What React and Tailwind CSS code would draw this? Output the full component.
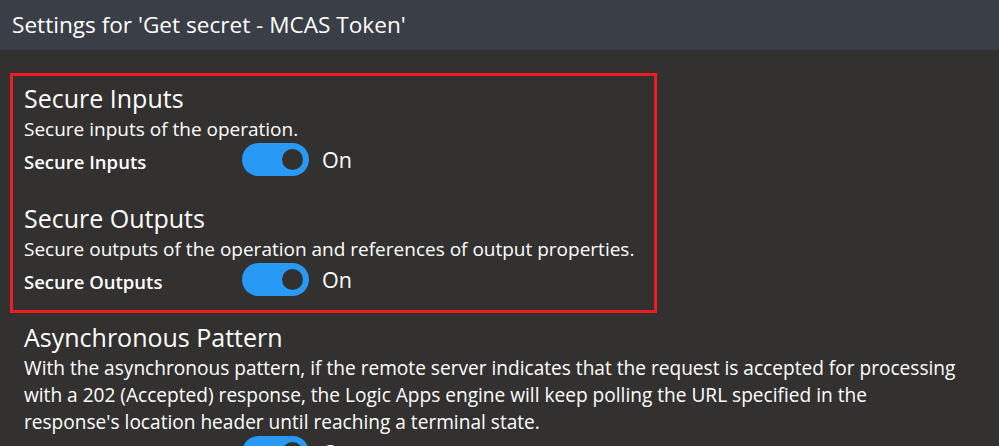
import React from 'react';

function Toggle() {
  return (
    <div className="flex items-center gap-[13px]">
      <div className="w-[67px] h-[33px] rounded-full bg-[#2899f5] flex items-center justify-end pr-[6px]">
        <div className="w-[21px] h-[21px] rounded-full bg-[#323130]" />
      </div>
      <span className="text-[21.5px] leading-none text-white">On</span>
    </div>
  );
}

function Setting({ title, desc, label }) {
  return (
    <div>
      <h2 className="text-[25px] leading-[30px] text-white">{title}</h2>
      <p className="mt-[3px] text-[19px] leading-[26px] text-white">{desc}</p>
      <div className="flex items-center mt-[1px]">
        <span className="w-[218px] mt-[5px] text-[18.5px] font-semibold text-white">{label}</span>
        <Toggle />
      </div>
    </div>
  );
}

export default function App() {
  return (
    <div className="w-[999px] h-[446px] overflow-hidden bg-[#323130] font-['Open_Sans',sans-serif]">
      {/* Header */}
      <div className="h-[50px] bg-[#3a3e46] flex items-center px-[12px]">
        <h1 className="text-[22.6px] text-white">Settings for 'Get secret - MCAS Token'</h1>
      </div>

      <div className="pl-[10px] pt-[23px]">
        <div className="w-[647px] h-[240px] border-[3px] border-[#ed1c24] pl-[11px] pt-[7px] flex flex-col gap-[27px]">
          <Setting title="Secure Inputs" desc="Secure inputs of the operation." label="Secure Inputs" />
          <Setting
            title="Secure Outputs"
            desc="Secure outputs of the operation and references of output properties."
            label="Secure Outputs"
          />
        </div>

        <div className="pl-[14px] pt-[9px]">
          <h2 className="text-[25px] leading-[30px] text-white">Asynchronous Pattern</h2>
          <p className="mt-[3px] text-[19.1px] leading-[27px] text-white whitespace-nowrap">
            With the asynchronous pattern, if the remote server indicates that the request is accepted for processing
            <br />
            with a 202 (Accepted) response, the Logic Apps engine will keep polling the URL specified in the
            <br />
            response's location header until reaching a terminal state.
          </p>
          <div className="flex items-center">
            <span className="w-[218px] mt-[5px] text-[18.5px] font-semibold text-white">Asynchronous Pattern</span>
            <Toggle />
          </div>
        </div>
      </div>
    </div>
  );
}
